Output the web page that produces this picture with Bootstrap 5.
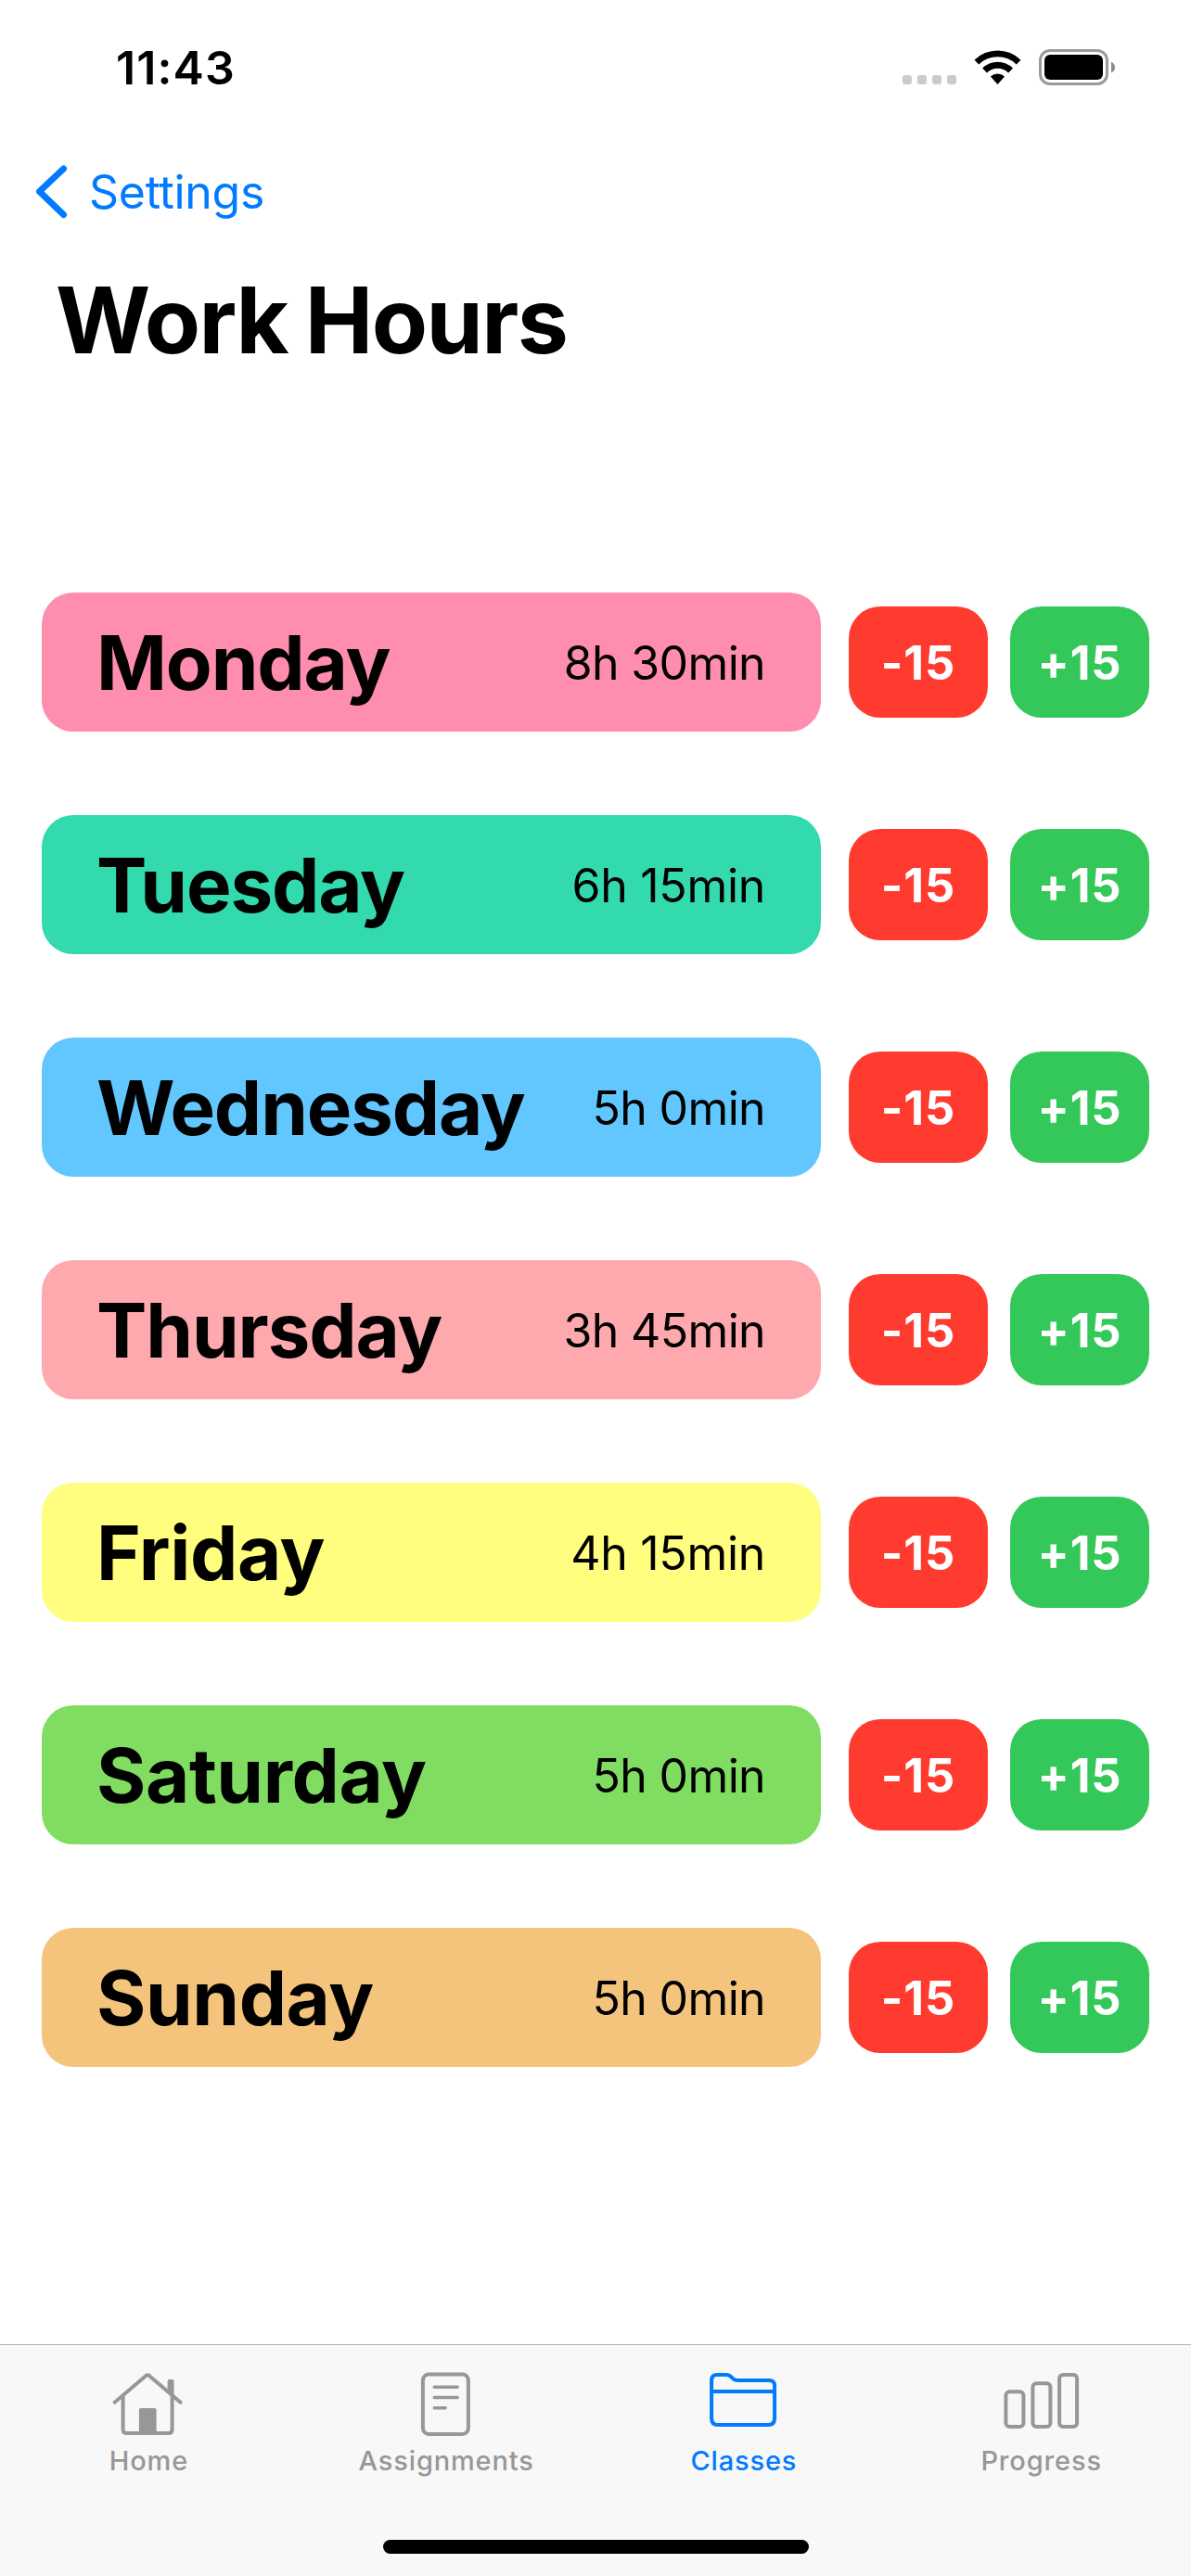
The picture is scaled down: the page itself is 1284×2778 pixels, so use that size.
<!DOCTYPE html>
<html lang="en">
<head>
<meta charset="utf-8">
<meta name="viewport" content="width=device-width, initial-scale=1">
<title>Work Hours</title>
<link href="https://cdn.jsdelivr.net/npm/bootstrap@5.3.0/dist/css/bootstrap.min.css" rel="stylesheet">
<style>
body{font-family:Inter,"Liberation Sans",sans-serif;color:#000;background:#fff;font-feature-settings:"calt" 0}
.screen{width:1284px;height:2778px;overflow:hidden}
.statusbar{height:146px;padding:0 80px 0 125px}
.clock{font-size:50px;font-weight:600;line-height:60px;letter-spacing:1.1px;margin-top:43px}
.status-icons{margin-top:50px}
.backlink{height:122px;padding-left:36px;color:#007aff;font-size:50px;line-height:60px;letter-spacing:-.3px}
.backlink svg{margin-right:22px}
.page-title{font-size:98.5px;font-weight:700;line-height:120px;letter-spacing:-1.6px;word-spacing:-3px;margin:18px 0 0 60px;height:353px}
.day-list{padding:0 45px;gap:90px}
.day-row{height:150px}
.day-bar{width:840px;height:150px;border-radius:34px;padding:1px 60px 0 59px}
.day-name{font-size:81.5px;font-weight:700;line-height:1;letter-spacing:-1.1px}
.d5 .day-name,.d6 .day-name,.d7 .day-name{letter-spacing:-.4px}
.day-time{font-size:50px;line-height:1;letter-spacing:-.65px}
.d2 .day-time,.d5 .day-time{letter-spacing:-.3px}
.step-btn,.step-btn:hover{width:150px;height:120px;border:0;border-radius:34px;color:#fff;font-size:50.5px;font-weight:700;line-height:1;letter-spacing:.9px;padding:2px 0 0}
.minus,.minus:hover{background:#ff3b30;margin-left:30px}
.plus,.plus:hover{background:#34c759;margin-left:24px}
.d1{background:#ff8dad}.d2{background:#33daad}.d3{background:#62c7ff}.d4{background:#fda9ad}.d5{background:#fffe7e}.d6{background:#80dd61}.d7{background:#f4c47c}
.tabs{height:250px;background:#f8f8f8;border-top:1px solid #b2b2b2}
.tabs nav{margin-right:1px}
.tab{flex:1 1 0;color:#979797;font-size:29px;font-weight:500;letter-spacing:.85px;line-height:36px}
.tab:hover{color:#979797}
.tab.on{color:#007aff}
.tab svg{margin-top:22px;display:block;fill:none;stroke:currentColor;stroke-width:4;stroke-linecap:round;stroke-linejoin:round}
.tab span{margin-top:5px}
.homebar{width:459px;height:15px;border-radius:8px;background:#000;margin:0 auto 24px}
</style>
</head>
<body>
<div class="screen d-flex flex-column">
<header class="statusbar d-flex justify-content-between align-items-start">
<div class="clock"><span>11:43</span></div>
<svg class="status-icons" width="234" height="46" viewBox="970 50 234 46">
<g fill="#cbcbcb"><rect x="973" y="81" width="10" height="10" rx="3"/><rect x="989" y="81" width="10" height="10" rx="3"/><rect x="1005" y="81" width="10" height="10" rx="3"/><rect x="1021" y="81" width="10" height="10" rx="3"/></g>
<path d="M1050.500 64.700A35.500 35.500 0 0 1 1100.500 64.700L1095.800 69.500A28.900 28.900 0 0 0 1055.300 69.500ZM1059.100 73.600A23.400 23.400 0 0 1 1092 73.600L1087.200 78.500A16.600 16.600 0 0 0 1063.900 78.500ZM1067.900 82.500A11.300 11.300 0 0 1 1083.100 82.500L1075.500 91Z" fill="#000"/>
<rect x="1121.500" y="54.500" width="72" height="36" rx="10.500" fill="none" stroke="#9b9b9b" stroke-width="3"/>
<rect x="1126" y="59" width="63" height="27" rx="6" fill="#000"/>
<path d="M1198 66.500Q1202 68.500 1202 72.500T1198 78.500Z" fill="#8b8b8b"/>
</svg>
</header>
<nav class="backlink d-flex align-items-center">
<svg width="38" height="60" viewBox="36 177 38 60"><path d="M68.500 182L42.500 206.500 68.500 231.500" fill="none" stroke="#007aff" stroke-width="7" stroke-linecap="round" stroke-linejoin="round"/></svg>
<span>Settings</span>
</nav>
<h1 class="page-title"><span>Work Hours</span></h1>
<main class="day-list d-flex flex-column flex-grow-1">
<div class="day-row d-flex align-items-center"><div class="day-bar d1 d-flex justify-content-between align-items-center"><span class="day-name">Monday</span><span class="day-time">8h 30min</span></div><button class="btn step-btn minus"><span>-15</span></button><button class="btn step-btn plus"><span>+15</span></button></div>
<div class="day-row d-flex align-items-center"><div class="day-bar d2 d-flex justify-content-between align-items-center"><span class="day-name">Tuesday</span><span class="day-time">6h 15min</span></div><button class="btn step-btn minus"><span>-15</span></button><button class="btn step-btn plus"><span>+15</span></button></div>
<div class="day-row d-flex align-items-center"><div class="day-bar d3 d-flex justify-content-between align-items-center"><span class="day-name">Wednesday</span><span class="day-time">5h 0min</span></div><button class="btn step-btn minus"><span>-15</span></button><button class="btn step-btn plus"><span>+15</span></button></div>
<div class="day-row d-flex align-items-center"><div class="day-bar d4 d-flex justify-content-between align-items-center"><span class="day-name">Thursday</span><span class="day-time">3h 45min</span></div><button class="btn step-btn minus"><span>-15</span></button><button class="btn step-btn plus"><span>+15</span></button></div>
<div class="day-row d-flex align-items-center"><div class="day-bar d5 d-flex justify-content-between align-items-center"><span class="day-name">Friday</span><span class="day-time">4h 15min</span></div><button class="btn step-btn minus"><span>-15</span></button><button class="btn step-btn plus"><span>+15</span></button></div>
<div class="day-row d-flex align-items-center"><div class="day-bar d6 d-flex justify-content-between align-items-center"><span class="day-name">Saturday</span><span class="day-time">5h 0min</span></div><button class="btn step-btn minus"><span>-15</span></button><button class="btn step-btn plus"><span>+15</span></button></div>
<div class="day-row d-flex align-items-center"><div class="day-bar d7 d-flex justify-content-between align-items-center"><span class="day-name">Sunday</span><span class="day-time">5h 0min</span></div><button class="btn step-btn minus"><span>-15</span></button><button class="btn step-btn plus"><span>+15</span></button></div>
</main>
<footer class="tabs d-flex flex-column justify-content-between">
<nav class="d-flex">
<a class="tab d-flex flex-column align-items-center text-decoration-none"><svg width="80" height="80" viewBox="120.4 2551 80 80">
<path d="M124 2590.700L157.800 2562Q159.500 2560.500 161.200 2562L195 2590.700M133 2584V2620Q133 2624 137 2624H182Q186 2624 186 2620V2584"/>
<path d="M181 2580V2568Q181 2566 183 2566H186Q188 2566 188 2568V2586ZM150.300 2624V2599Q150.300 2597 152.300 2597H167Q169 2597 169 2599V2624Z" fill="currentColor" stroke="none"/></svg><span>Home</span></a>
<a class="tab d-flex flex-column align-items-center text-decoration-none"><svg width="80" height="80" viewBox="441.1 2551 80 80">
<rect x="456" y="2560.500" width="49" height="64.500" rx="6.500"/><path d="M468.400 2574.300H493.300M468.400 2585.500H493.300M468.400 2596.700H480.300" stroke-width="3.500"/></svg><span>Assignments</span></a>
<a class="tab on d-flex flex-column align-items-center text-decoration-none"><svg width="80" height="80" viewBox="761.9 2551 80 80">
<path d="M767 2608V2567Q767 2561 773 2561H783Q785.500 2561 787 2562.300L790.500 2565.500Q792.300 2567 795 2567H829Q835 2567 835 2573V2608Q835 2615 828 2615H774Q767 2615 767 2608ZM767 2579H835"/></svg><span>Classes</span></a>
<a class="tab d-flex flex-column align-items-center text-decoration-none"><svg width="80" height="80" viewBox="1082.6 2551 80 80" overflow="visible">
<rect x="1084" y="2579.300" width="19" height="37.700" rx="4"/><rect x="1113" y="2570.200" width="19" height="46.800" rx="4"/><rect x="1141.700" y="2561" width="19" height="56" rx="4"/></svg><span>Progress</span></a>
</nav>
<div class="homebar"></div>
</footer>
</div>
<script src="https://cdn.jsdelivr.net/npm/bootstrap@5.3.0/dist/js/bootstrap.bundle.min.js"></script>
</body>
</html>
